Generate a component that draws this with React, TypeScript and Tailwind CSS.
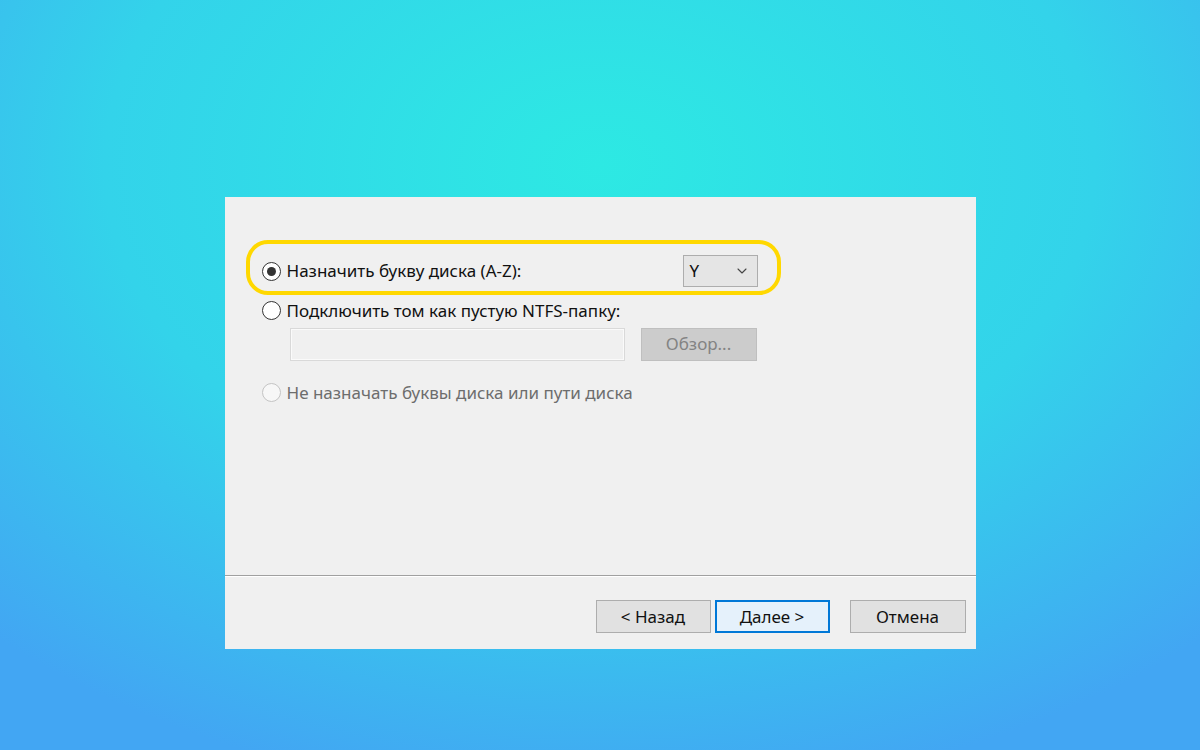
import { ChevronDown } from "lucide-react";

function Radio({ checked, disabled }: { checked?: boolean; disabled?: boolean }) {
  return (
    <span
      className={
        "flex h-[19px] w-[19px] shrink-0 items-center justify-center rounded-full border " +
        (disabled ? "border-[#c4c4c4] bg-[#f7f7f7]" : "border-[#333333] bg-white")
      }
    >
      {checked && <span className="h-[9px] w-[9px] rounded-full bg-[#333333]" />}
    </span>
  );
}

export default function App() {
  return (
    <div className="flex h-[750px] w-[1200px] items-start justify-center bg-[radial-gradient(ellipse_75%_85%_at_50%_22%,#2de9e3_0%,#33d3ea_55%,#42a6f3_100%)] pt-[197px] font-['Noto_Sans',sans-serif]">
      <div className="flex h-[452px] w-[751px] flex-col bg-[#f0f0f0] text-[17px] text-[#111111]">
        <div className="h-[378px] px-[21px] pt-[43px]">
          <div className="flex h-[55px] w-[535px] items-center rounded-[22px] border-[4px] border-[#ffd800] pl-[12px] pr-[19px] pt-[7px]">
            <Radio checked />
            <span className="ml-[6px]">Назначить букву диска (A-Z):</span>
            <div className="ml-auto flex h-[32px] w-[75px] items-center justify-between border border-[#adadad] bg-[#e5e5e5] pl-[6px] pr-[7px]">
              <span>Y</span>
              <ChevronDown className="h-[16px] w-[16px] text-[#444]" strokeWidth={1.6} />
            </div>
          </div>
          <div className="mt-[3px] flex items-center pl-[16px]">
            <Radio />
            <span className="ml-[6px]">Подключить том как пустую NTFS-папку:</span>
          </div>
          <div className="mt-[4px] flex items-center gap-[16px] pl-[44px]">
            <div className="h-[33px] w-[335px] border border-[#d9d9d9] bg-[#f0f0f0] shadow-[inset_0_0_0_1px_#fafafa]" />
            <div className="flex h-[33px] w-[116px] items-center justify-center border border-[#bfbfbf] bg-[#cccccc] text-[#838383]">
              Обзор...
            </div>
          </div>
          <div className="mt-[19px] flex items-center pl-[16px] text-[#6d6d6d]">
            <Radio disabled />
            <span className="ml-[6px]">Не назначать буквы диска или пути диска</span>
          </div>
        </div>
        <div className="h-[2px] border-t border-[#a0a0a0] bg-white" />
        <div className="flex justify-end gap-[4px] pr-[10px] pt-[23px]">
          <button className="flex h-[33px] w-[115px] items-center justify-center border border-[#adadad] bg-[#e1e1e1]">
            &lt; Назад
          </button>
          <button className="flex h-[33px] w-[115px] items-center justify-center border-2 border-[#0078d7] bg-[#e5f1fb]">
            Далее &gt;
          </button>
          <button className="ml-[16px] flex h-[33px] w-[116px] items-center justify-center border border-[#adadad] bg-[#e1e1e1]">
            Отмена
          </button>
        </div>
      </div>
    </div>
  );
}
